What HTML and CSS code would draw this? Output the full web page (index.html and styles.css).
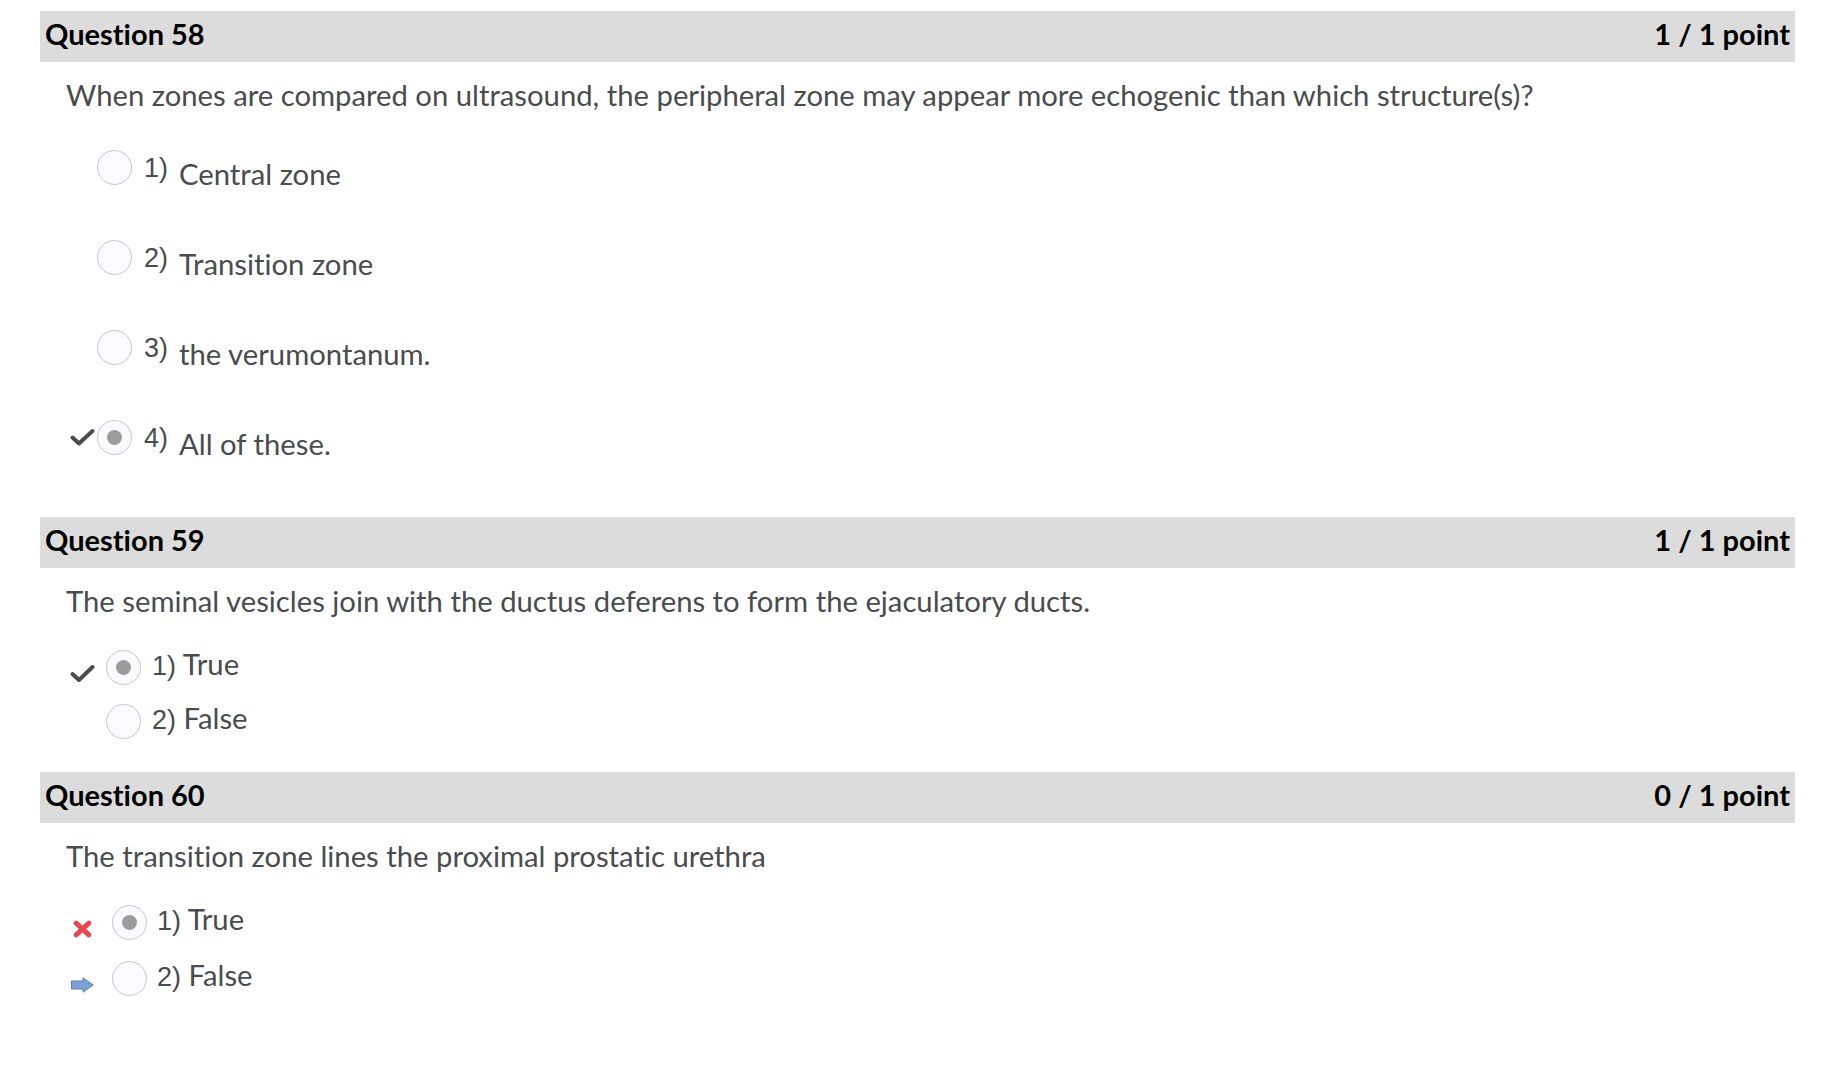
FILE: index.html
```html
<!DOCTYPE html>
<html lang="en">
<head>
<meta charset="utf-8">
<title>Quiz review</title>
<link rel="stylesheet" href="styles.css">
</head>
<body>
<main class="quiz">

  <section class="q q58">
    <div class="q-head"><span>Question 58</span><span>1 / 1 point</span></div>
    <p class="q-text">When zones are compared on ultrasound, the peripheral zone may appear more echogenic than which structure(s)?</p>
    <div class="opts opts-tall">
      <div class="opt"><span class="mark"></span><span class="radio"></span><span class="num">1)</span><span class="label">Central zone</span></div>
      <div class="opt"><span class="mark"></span><span class="radio"></span><span class="num">2)</span><span class="label">Transition zone</span></div>
      <div class="opt"><span class="mark"></span><span class="radio"></span><span class="num">3)</span><span class="label">the verumontanum.</span></div>
      <div class="opt"><span class="mark"><svg class="ico-check" width="25" height="18" viewBox="0 0 25 18"><path d="M2.5 9.5 L9 15.5 L22.5 3" fill="none" stroke="#494c4e" stroke-width="4" stroke-linecap="round" stroke-linejoin="round"/></svg></span><span class="radio on"></span><span class="num">4)</span><span class="label">All of these.</span></div>
    </div>
  </section>

  <section class="q q59">
    <div class="q-head"><span>Question 59</span><span>1 / 1 point</span></div>
    <p class="q-text">The seminal vesicles join with the ductus deferens to form the ejaculatory ducts.</p>
    <div class="opts opts-short">
      <div class="opt"><span class="mark"><svg class="ico-check" width="25" height="20" viewBox="0 0 25 20"><path d="M2.5 11 L9 17 L22.5 4" fill="none" stroke="#494c4e" stroke-width="4" stroke-linecap="round" stroke-linejoin="round"/></svg></span><span class="radio on"></span><span class="txt"><span class="num">1)</span> True</span></div>
      <div class="opt"><span class="mark"></span><span class="radio"></span><span class="txt"><span class="num">2)</span> False</span></div>
    </div>
  </section>

  <section class="q q60">
    <div class="q-head"><span>Question 60</span><span>0 / 1 point</span></div>
    <p class="q-text">The transition zone lines the proximal prostatic urethra</p>
    <div class="opts opts-short">
      <div class="opt"><span class="mark"><svg class="ico-x" width="19" height="18" viewBox="0 0 19 18"><path d="M3.2 3.2 L15.8 14.8 M15.8 3.2 L3.2 14.8" fill="none" stroke="#e5484f" stroke-width="5" stroke-linecap="round"/></svg></span><span class="radio on"></span><span class="txt"><span class="num">1)</span> True</span></div>
      <div class="opt"><span class="mark"><svg class="ico-arrow" width="23" height="16" viewBox="0 0 23 16"><path d="M0.5 4 H12 V0.8 L22.2 8 L12 15.2 V12 H0.5 Z" fill="#7ba0d4" stroke="#5a7fb5" stroke-width="1" stroke-linejoin="round"/></svg></span><span class="radio"></span><span class="txt"><span class="num">2)</span> False</span></div>
    </div>
  </section>

</main>
</body>
</html>
```

FILE: styles.css
```css
html, body {
  margin: 0;
  padding: 0;
  background: #ffffff;
}

body {
  font-family: Lato, "Open Sans", sans-serif;
  color: #494c4e;
  font-variant-ligatures: none;
}

.quiz {
  padding: 11px 34px 0 40px;
}

.q-head {
  display: flex;
  justify-content: space-between;
  align-items: center;
  box-sizing: border-box;
  height: 51px;
  background: #dcdcdc;
  padding: 0 5px 5px 5px;
  color: #000;
  font-weight: 700;
  font-size: 29px;
  line-height: 40px;
}

.q-text {
  margin: 15px 0 0 26px;
  font-size: 29.25px;
  line-height: 36px;
}

.opts {
  display: flex;
  flex-direction: column;
  padding-left: 20px;
  margin-top: 31px;
}

.opt {
  display: flex;
  align-items: flex-start;
}

.mark {
  display: flex;
  justify-content: flex-end;
  align-items: flex-start;
  flex: none;
}

.radio {
  flex: none;
  width: 33px;
  height: 33px;
  border: 1px solid #c6c6c6;
  border-radius: 50%;
  background: #f9fbff;
  display: flex;
  align-items: center;
  justify-content: center;
}

.radio.on::after {
  content: "";
  width: 15px;
  height: 15px;
  border-radius: 50%;
  background: #9c9c9c;
}

.num {
  font-family: "Liberation Sans", Arial, sans-serif;
  font-size: 27px;
}

/* Question 58: tall rows */
.opts-tall {
  margin-top: 37px;
}

.opts-tall .opt {
  height: 90px;
}

.opts-tall .mark {
  width: 37px;
}

.opts-tall .mark svg {
  margin: 8px 2px 0 0;
}

.opts-tall .num {
  margin: 2px 0 0 12px;
  line-height: 32px;
}

.opts-tall .label {
  margin: 8px 0 0 11px;
  font-size: 29.25px;
  line-height: 32px;
}

/* True/False rows */
.opts-short .txt {
  font-size: 29.25px;
  line-height: 28px;
}

.q59 {
  margin-top: 7px;
}

.q59 .opt {
  height: 54px;
}

.q59 .opt:last-child {
  height: 35px;
}

.q59 .mark {
  width: 46px;
}

.q59 .mark svg {
  margin: 13px 11px 0 0;
}

.q59 .txt {
  margin-left: 11px;
}

.q60 {
  margin-top: 33px;
}

.q60 .opt {
  height: 56px;
}

.q60 .mark {
  width: 52px;
}

.q60 .ico-x {
  margin: 15px 20px 0 0;
}

.q60 .ico-arrow {
  margin: 16px 18px 0 0;
}

.q60 .txt {
  margin-left: 10px;
}
```
